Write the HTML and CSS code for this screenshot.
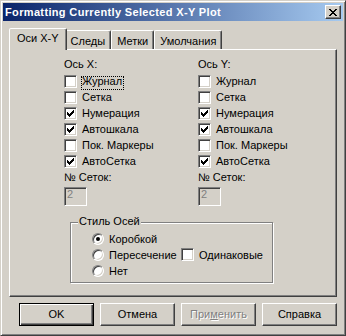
FILE: index.html
```html
<!DOCTYPE html>
<html>
<head>
    <meta charset="UTF-8">
    <link rel="stylesheet" href="styles.css">
</head>
<body>
<div class="window">
    <div class="titlebar">
        <span class="title">Formatting Currently Selected X-Y Plot</span>
        <span class="close">
            <svg width="8" height="7" viewBox="0 0 8 7" shape-rendering="crispEdges">
                <path d="M0 0h2v1H0zM6 0h2v1H6zM1 1h2v1H1zM5 1h2v1H5zM2 2h4v1H2zM3 3h2v1H3zM2 4h4v1H2zM1 5h2v1H1zM5 5h2v1H5zM0 6h2v1H0zM6 6h2v1H6z"/>
            </svg>
        </span>
    </div>

    <div class="client">
        <div class="tabs">
            <div class="tab active">Оси X-Y</div>
            <div class="tab">Следы</div>
            <div class="tab">Метки</div>
            <div class="tab">Умолчания</div>
        </div>

        <div class="panel">
            <div class="axes">
                <div class="axis">
                    <div class="cap">Ось X:</div>
                    <div class="row"><span class="cb"></span><span class="lbl focus">Журнал</span></div>
                    <div class="row"><span class="cb"></span><span class="lbl">Сетка</span></div>
                    <div class="row"><span class="cb on"></span><span class="lbl">Нумерация</span></div>
                    <div class="row"><span class="cb on"></span><span class="lbl">Автошкала</span></div>
                    <div class="row"><span class="cb"></span><span class="lbl">Пок. Маркеры</span></div>
                    <div class="row"><span class="cb on"></span><span class="lbl">АвтоСетка</span></div>
                    <div class="cap cap-num">№ Сеток:</div>
                    <div class="field">2</div>
                </div>
                <div class="axis">
                    <div class="cap">Ось Y:</div>
                    <div class="row"><span class="cb"></span><span class="lbl">Журнал</span></div>
                    <div class="row"><span class="cb"></span><span class="lbl">Сетка</span></div>
                    <div class="row"><span class="cb on"></span><span class="lbl">Нумерация</span></div>
                    <div class="row"><span class="cb on"></span><span class="lbl">Автошкала</span></div>
                    <div class="row"><span class="cb"></span><span class="lbl">Пок. Маркеры</span></div>
                    <div class="row"><span class="cb on"></span><span class="lbl">АвтоСетка</span></div>
                    <div class="cap cap-num">№ Сеток:</div>
                    <div class="field">2</div>
                </div>
            </div>

            <div class="group">
                <span class="group-label">Стиль Осей</span>
                <div class="row"><span class="rb on"></span><span class="lbl">Коробкой</span></div>
                <div class="row">
                    <span class="rb"></span><span class="lbl cut">Пересечение</span>
                    <span class="cb solo"></span><span class="lbl">Одинаковые</span>
                </div>
                <div class="row"><span class="rb"></span><span class="lbl">Нет</span></div>
            </div>
        </div>

        <div class="buttons">
            <div class="btn default">OK</div>
            <div class="btn">Отмена</div>
            <div class="btn disabled">При<u>м</u>енить</div>
            <div class="btn">Справка</div>
        </div>
    </div>
</div>
</body>
</html>
```

FILE: styles.css
```css
* {
    box-sizing: border-box;
}

body {
    margin: 0;
    background: #d4d0c8;
    font-family: "Liberation Sans", Arial, sans-serif;
    font-size: 11px;
    color: #000;
}

/* Window frame */
.window {
    width: 346px;
    height: 336px;
    padding: 2px;
    background: #d4d0c8;
    border: 1px solid;
    border-color: #d4d0c8 #404040 #404040 #d4d0c8;
    box-shadow: inset 1px 1px #fff, inset -1px -1px #808080;
    display: flex;
    flex-direction: column;
}

.titlebar {
    height: 18px;
    flex: none;
    display: flex;
    align-items: center;
    justify-content: space-between;
    padding: 0 2px 0 2px;
    background: linear-gradient(to right, #0a246a, #a6caf0);
    color: #fff;
}

.title {
    font-weight: bold;
    letter-spacing: 0.35px;
    line-height: 13px;
    white-space: nowrap;
}

.close {
    width: 16px;
    height: 14px;
    display: flex;
    align-items: center;
    justify-content: center;
    background: #d4d0c8;
    border: 1px solid;
    border-color: #fff #404040 #404040 #fff;
    box-shadow: inset -1px -1px #808080;
}

.client {
    flex: 1;
    padding: 7px 6px 0;
    display: flex;
    flex-direction: column;
}

/* Tabs */
.tabs {
    height: 21px;
    display: flex;
    align-items: flex-end;
    padding-left: 2px;
}

.tab {
    height: 19px;
    padding: 4px 5px 0;
    line-height: 13px;
    white-space: nowrap;
    border: 1px solid;
    border-bottom: 0;
    border-color: #fff #404040 transparent #fff;
    border-radius: 2px 2px 0 0;
    box-shadow: inset -1px 0 #808080;
}

.tab.active {
    height: 22px;
    margin: 0 -2px -1px;
    padding: 3px 7px 0;
    position: relative;
    z-index: 1;
    background: #d4d0c8;
}

.panel {
    height: 248px;
    flex: none;
    padding: 8px 0 0 54px;
    border: 1px solid;
    border-color: #fff #404040 #404040 #fff;
    box-shadow: inset -1px -1px #808080;
}

.axes {
    display: grid;
    grid-template-columns: 134px 134px;
}

.cap {
    line-height: 13px;
    margin-bottom: 3px;
}

.cap-num {
    margin-top: 1px;
}

.row {
    height: 16px;
    display: flex;
}

.lbl {
    margin: 1px 0 0 4px;
    padding-left: 1px;
    line-height: 13px;
    white-space: nowrap;
}

.lbl.focus {
    width: 43px;
    margin-top: 2px;
    line-height: 11px;
    outline: 1px dotted #000;
    outline-offset: -1px;
}

.lbl.cut {
    width: 70px;
}

/* Checkbox */
.cb {
    width: 13px;
    height: 13px;
    flex: none;
    margin-top: 1px;
    background: #fff;
    border: 1px solid;
    border-color: #808080 #fff #fff #808080;
    box-shadow: inset 1px 1px #404040, inset -1px -1px #d4d0c8;
}

.cb.on {
    background: #fff url("data:image/svg+xml,%3Csvg xmlns='http://www.w3.org/2000/svg' width='7' height='7' shape-rendering='crispEdges'%3E%3Cpath d='M0 2h1v3H0zM1 3h1v3H1zM2 4h1v3H2zM3 3h1v3H3zM4 2h1v3H4zM5 1h1v3H5zM6 0h1v3H6z'/%3E%3C/svg%3E") center no-repeat;
}

.cb.solo {
    margin: 0 0 0 3px;
}

/* Radio */
.rb {
    width: 12px;
    height: 12px;
    flex: none;
    margin-top: 1px;
    position: relative;
    background: #fff;
    border-radius: 50%;
    border: 1px solid;
    border-color: #808080 #fff #fff #808080;
    box-shadow: inset 1px 1px #404040, inset -1px -1px #d4d0c8;
}

.rb.on::after {
    content: '';
    position: absolute;
    left: 3px;
    top: 3px;
    width: 4px;
    height: 4px;
    border-radius: 50%;
    background: #000;
}

.field {
    width: 23px;
    height: 19px;
    padding-left: 2px;
    line-height: 13px;
    color: #808080;
    border: 1px solid;
    border-color: #808080 #fff #fff #808080;
    box-shadow: inset 1px 1px #404040, inset -1px -1px #d4d0c8;
}

/* Group box */
.group {
    position: relative;
    width: 203px;
    height: 61px;
    margin: 16px 0 0 6px;
    padding: 9px 0 0 21px;
    border: 1px solid #808080;
    box-shadow: inset 1px 1px #fff, 1px 1px #fff;
}

.group-label {
    position: absolute;
    left: 7px;
    top: -8px;
    padding: 0 1px;
    line-height: 13px;
    background: #d4d0c8;
}

/* Buttons */
.buttons {
    display: flex;
    justify-content: flex-end;
    gap: 6px;
    margin-top: 6px;
}

.btn {
    width: 75px;
    height: 23px;
    text-align: center;
    line-height: 21px;
    border: 1px solid;
    border-color: #fff #404040 #404040 #fff;
    box-shadow: inset -1px -1px #808080;
}

.btn.default {
    border-color: #000;
    box-shadow: inset 1px 1px #fff, inset -1px -1px #404040, inset -2px -2px #808080;
}

.btn.disabled {
    color: #808080;
    text-shadow: 1px 1px #fff;
}
```
